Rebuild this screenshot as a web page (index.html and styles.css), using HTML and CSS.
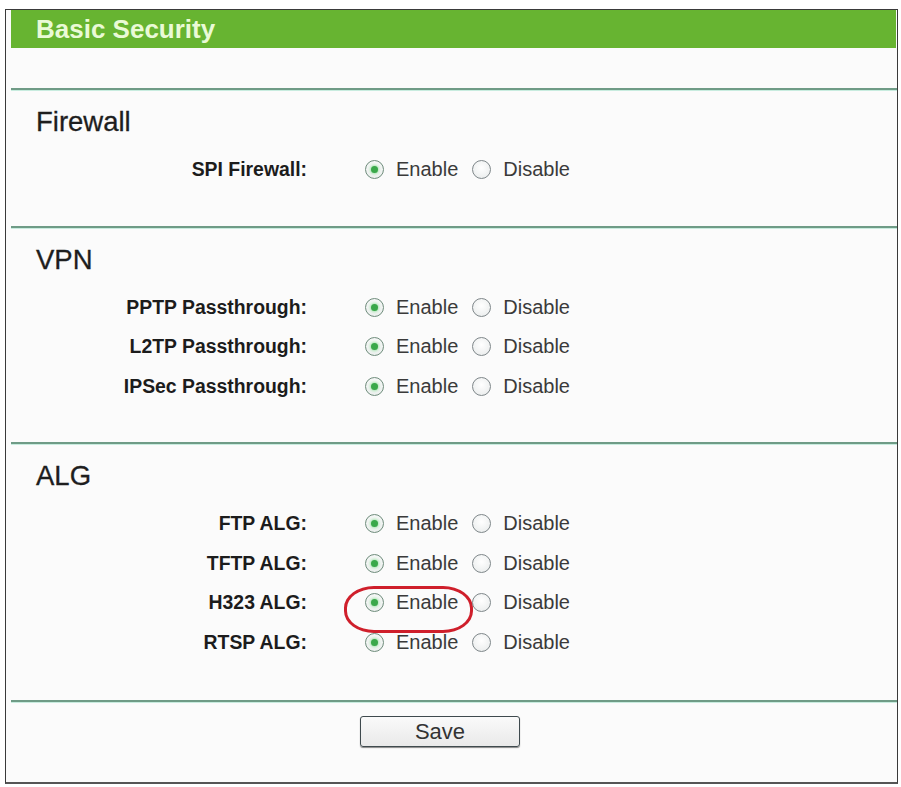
FILE: index.html
```html
<!DOCTYPE html>
<html lang="en">
<head>
    <meta charset="UTF-8">
    <meta name="viewport" content="width=device-width, initial-scale=1.0">
    <title>Basic Security</title>
    <link rel="stylesheet" href="styles.css">
</head>
<body>
    <div class="panel">
        <!-- Title bar -->
        <div class="title-bar">Basic Security</div>
        <div class="spacer"></div>

        <!-- Firewall -->
        <section class="section">
            <h2>Firewall</h2>
            <div class="row">
                <span class="label">SPI Firewall:</span>
                <span class="opt"><span class="radio checked"></span>Enable</span>
                <span class="opt"><span class="radio"></span>Disable</span>
            </div>
        </section>

        <!-- VPN -->
        <section class="section">
            <h2>VPN</h2>
            <div class="row">
                <span class="label">PPTP Passthrough:</span>
                <span class="opt"><span class="radio checked"></span>Enable</span>
                <span class="opt"><span class="radio"></span>Disable</span>
            </div>
            <div class="row">
                <span class="label">L2TP Passthrough:</span>
                <span class="opt"><span class="radio checked"></span>Enable</span>
                <span class="opt"><span class="radio"></span>Disable</span>
            </div>
            <div class="row">
                <span class="label">IPSec Passthrough:</span>
                <span class="opt"><span class="radio checked"></span>Enable</span>
                <span class="opt"><span class="radio"></span>Disable</span>
            </div>
        </section>

        <!-- ALG -->
        <section class="section">
            <h2>ALG</h2>
            <div class="row">
                <span class="label">FTP ALG:</span>
                <span class="opt"><span class="radio checked"></span>Enable</span>
                <span class="opt"><span class="radio"></span>Disable</span>
            </div>
            <div class="row">
                <span class="label">TFTP ALG:</span>
                <span class="opt"><span class="radio checked"></span>Enable</span>
                <span class="opt"><span class="radio"></span>Disable</span>
            </div>
            <div class="row">
                <span class="label">H323 ALG:</span>
                <span class="opt marked"><span class="radio checked"></span>Enable</span>
                <span class="opt"><span class="radio"></span>Disable</span>
            </div>
            <div class="row">
                <span class="label">RTSP ALG:</span>
                <span class="opt"><span class="radio checked"></span>Enable</span>
                <span class="opt"><span class="radio"></span>Disable</span>
            </div>
        </section>

        <!-- Save -->
        <div class="footer">
            <button class="save" type="button">Save</button>
        </div>
    </div>
</body>
</html>
```

FILE: styles.css
```css
/* Basic reset */
* {
    margin: 0;
    padding: 0;
    box-sizing: border-box;
}

body {
    background-color: #ffffff;
    font-family: "Liberation Sans", Arial, sans-serif;
    color: #333;
}

/* Outer panel */
.panel {
    margin: 9px 0 0 5px;
    width: 893px;
    height: 775px;
    border: 1px solid #3a3a3a;
    border-bottom: 2px solid #555;
    background-color: #fbfbfb;
    padding-left: 5px;
}

/* Green title bar */
.title-bar {
    height: 38px;
    margin-right: 1px;
    background-color: #67b431;
    color: #eafad6;
    font-size: 26px;
    font-weight: bold;
    line-height: 38px;
    padding-left: 25px;
}

.spacer {
    height: 40px;
}

/* Sections */
.section {
    border-top: 2px solid #6f9b86;
    box-shadow: inset 0 1px 0 #c8ecdf;
    padding: 17px 0 36px;
}

.section:last-of-type {
    padding-bottom: 38px;
}

.section h2 {
    font-size: 27.5px;
    font-weight: normal;
    color: #1e1e1e;
    line-height: 30px;
    padding-left: 25px;
    margin-bottom: 13px;
    -webkit-text-stroke: 0.3px #1e1e1e;
}

/* Option rows */
.row {
    display: flex;
    align-items: center;
    height: 39.5px;
}

.label {
    width: 296px;
    text-align: right;
    font-size: 19.4px;
    font-weight: bold;
    color: #1c1c1c;
    margin-right: 58px;
}

.opt {
    display: flex;
    align-items: center;
    font-size: 20px;
    color: #3a3a3a;
    position: relative;
}

.opt + .opt {
    margin-left: 14px;
}

.radio {
    display: inline-block;
    width: 19px;
    height: 19px;
    border-radius: 50%;
    border: 1.5px solid #7f878a;
    background: radial-gradient(circle at 50% 40%, #ffffff 0%, #eef0f0 70%, #dfe3e3 100%);
    margin-right: 12px;
    position: relative;
}

.radio.checked {
    border-color: #6f8d7c;
}

.radio.checked::after {
    content: "";
    position: absolute;
    left: 50%;
    top: 50%;
    width: 7px;
    height: 7px;
    margin: -3.5px 0 0 -3.5px;
    border-radius: 50%;
    background-color: #3aa84a;
    box-shadow: 0 0 3px 1px #9fe0a8;
}

/* Red mark around the H323 option */
.marked::before {
    content: "";
    position: absolute;
    left: -21px;
    right: -15px;
    top: -5px;
    bottom: -19px;
    border: 3px solid #cf1f2b;
    border-radius: 30px / 22px;
}

/* Save button */
.footer {
    border-top: 2px solid #6f9b86;
    box-shadow: inset 0 1px 0 #c8ecdf;
    padding-top: 14px;
    padding-left: 349px;
}

.save {
    width: 160px;
    height: 31px;
    border: 1px solid #3f4a4e;
    border-radius: 3px;
    background: linear-gradient(#fafafa, #e9e9e9);
    font-family: "Liberation Sans", Arial, sans-serif;
    font-size: 22px;
    color: #333;
    box-shadow: 0 1px 1px #888;
}
```
